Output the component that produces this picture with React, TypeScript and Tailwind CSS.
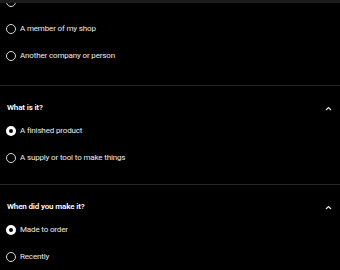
import React from 'react'

type Opt = { label: string; checked?: boolean }

const Radio = ({ checked }: { checked?: boolean }) => (
  <span
    className={
      checked
        ? 'w-[10px] h-[10px] rounded-full border-[3px] border-white bg-black shrink-0'
        : 'w-[10px] h-[10px] rounded-full border border-[#dcdcdc] shrink-0'
    }
  />
)

const Option = ({ label, checked }: Opt) => (
  <div className="flex items-center h-[27px] pl-[6px] gap-[4px]">
    <Radio checked={checked} />
    <span className="text-[8px] tracking-[-0.15px] text-[#ededed] leading-none">{label}</span>
  </div>
)

const Chevron = () => (
  <svg width="7" height="5" viewBox="0 0 7 5" fill="none">
    <polyline points="1,4 3.5,1.5 6,4" stroke="#e6e6e6" strokeWidth="1.2" />
  </svg>
)

const Section = ({ title, options }: { title: string; options: Opt[] }) => (
  <div className="border-t border-[#262626] pt-[13px] pb-[13px]">
    <div className="flex items-center justify-between h-[18px] pl-[7px] pr-[8px]">
      <span className="text-[8px] tracking-[-0.15px] font-semibold text-white leading-none">{title}</span>
      <Chevron />
    </div>
    {options.map((o) => (
      <Option key={o.label} {...o} />
    ))}
  </div>
)

const App = () => {
  return (
    <div
      className="relative w-[340px] h-[270px] overflow-hidden bg-black"
      style={{ fontFamily: 'Roboto, "Liberation Sans", sans-serif' }}
    >
      <div className="absolute top-0 left-0 right-0 h-[3px] bg-[#1c1c1c] z-10" />
      <div className="mt-[-12px] pb-[16px]">
        <div className="flex items-center h-[27px] pl-[6px]">
          <Radio />
        </div>
        <Option label="A member of my shop" />
        <Option label="Another company or person" />
      </div>
      <Section
        title="What is it?"
        options={[
          { label: 'A finished product', checked: true },
          { label: 'A supply or tool to make things' },
        ]}
      />
      <Section
        title="When did you make it?"
        options={[{ label: 'Made to order', checked: true }, { label: 'Recently' }]}
      />
    </div>
  )
}

export default App
